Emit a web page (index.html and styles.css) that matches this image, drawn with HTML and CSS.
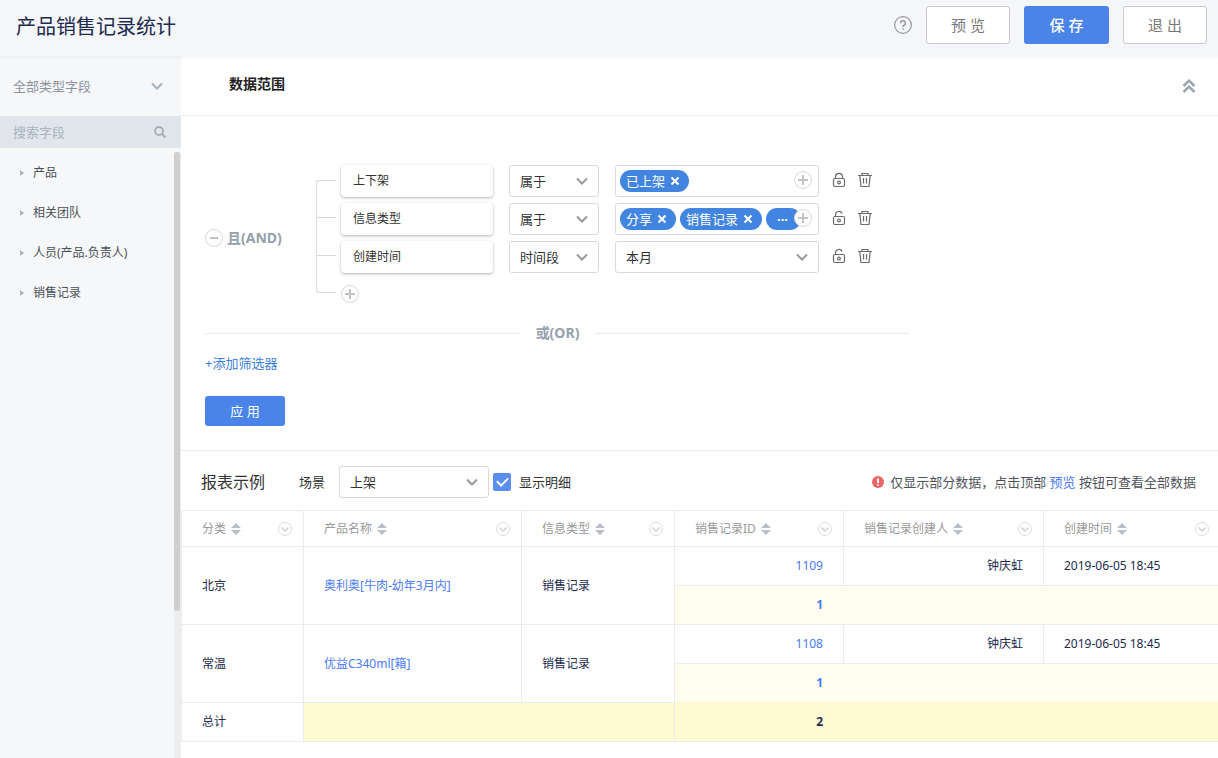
FILE: index.html
```html
<!DOCTYPE html>
<html lang="zh-CN">
<head>
<meta charset="utf-8">
<title>产品销售记录统计</title>
<link rel="stylesheet" href="styles.css">
</head>
<body>
<svg class="sprite" aria-hidden="true">
  <symbol id="chevron" viewBox="0 0 14 14"><path d="M2 4.5 7 9.5 12 4.5" fill="none" stroke="currentColor" stroke-width="2"/></symbol>
  <symbol id="plus" viewBox="0 0 18 18"><circle cx="9" cy="9" r="8.5" fill="#fff" stroke="#d9d9d9"/><path d="M4 9H14M9 4V14" stroke="#c4c4c4" stroke-width="2"/></symbol>
  <symbol id="minus" viewBox="0 0 18 18"><circle cx="9" cy="9" r="8.5" fill="#fff" stroke="#d9d9d9"/><path d="M5 9H13" stroke="#bfbfbf" stroke-width="2"/></symbol>
  <symbol id="cross" viewBox="0 0 10 10"><path d="M1.5 1.5 8.5 8.5M8.5 1.5 1.5 8.5" stroke="currentColor" stroke-width="2"/></symbol>
  <symbol id="lock" viewBox="0 0 14 16"><rect x="1.500" y="6.500" width="11" height="8" rx="1.500" fill="none" stroke="currentColor" stroke-width="1.200"/><path d="M3.500 6.500V4.800A3.500 3.500 0 0 1 10.500 4.800V6.500" fill="none" stroke="currentColor" stroke-width="1.200"/><circle cx="7" cy="10.500" r="1.400" fill="none" stroke="currentColor" stroke-width="1.200"/></symbol>
  <symbol id="unlock" viewBox="0 0 14 16"><rect x="1.500" y="6.500" width="11" height="8" rx="1.500" fill="none" stroke="currentColor" stroke-width="1.200"/><path d="M3.500 6.500V4.800A3.500 3.500 0 0 1 10.200 3.500" fill="none" stroke="currentColor" stroke-width="1.200"/><circle cx="7" cy="10.500" r="1.400" fill="none" stroke="currentColor" stroke-width="1.200"/></symbol>
  <symbol id="trash" viewBox="0 0 14 16"><path d="M0 3.500H14M4 3.500V1.500H10V3.500M1.800 3.500 3 14.500H11L12.200 3.500M5.500 6V11.500M8.500 6V11.500" fill="none" stroke="currentColor" stroke-width="1.200"/></symbol>
  <symbol id="sort" viewBox="0 0 10 12"><path d="M5 0 10 5H0ZM0 7H10L5 12Z" fill="#b9bec7"/></symbol>
  <symbol id="menu" viewBox="0 0 14 14"><circle cx="7" cy="7" r="6.500" fill="#fff" stroke="#dcdcdc"/><path d="M3.500 5.500 7 9 10.500 5.500" fill="none" stroke="#d0d0d0" stroke-width="1.500"/></symbol>
</svg>

<header class="topbar">
  <h1 class="topbar-title">产品销售记录统计</h1>
  <div class="topbar-actions">
    <button class="icon-btn" aria-label="帮助"><svg class="i18" viewBox="0 0 18 18"><circle cx="9" cy="9" r="8.400" fill="none" stroke="#999" stroke-width="1.200"/><path d="M6.600 7.200A2.400 2.400 0 1 1 9.800 9.400Q9 9.800 9 11M9 12.200V13.700" fill="none" stroke="#999" stroke-width="1.500"/></svg></button>
    <button class="btn">预 览</button>
    <button class="btn btn-primary">保 存</button>
    <button class="btn">退 出</button>
  </div>
</header>

<div class="layout">
  <aside class="sidebar">
    <div class="picker scope">
      <select class="scope-select" aria-label="字段类型"><option>全部类型字段</option></select>
      <svg class="picker-arrow"><use href="#chevron"/></svg>
    </div>
    <div class="search">
      <input class="search-input" type="text" placeholder="搜索字段" aria-label="搜索字段">
      <svg class="search-icon" viewBox="0 0 12 12"><circle cx="5" cy="5" r="4" fill="none" stroke="currentColor" stroke-width="1.800"/><path d="M8 8 11.300 11.300" stroke="currentColor" stroke-width="2"/></svg>
    </div>
    <div class="tree-wrap">
      <ul class="tree">
        <li class="tree-item">产品</li>
        <li class="tree-item">相关团队</li>
        <li class="tree-item">人员(产品.负责人)</li>
        <li class="tree-item">销售记录</li>
      </ul>
      <div class="track"><div class="thumb"></div></div>
    </div>
  </aside>

  <main class="main">
    <div class="range-head">
      <h2 class="range-title">数据范围</h2>
      <button class="icon-btn collapse" aria-label="收起"><svg class="i14" viewBox="0 0 14 14"><path d="M1.500 7 7 1.700 12.500 7M1.500 13 7 7.700 12.500 13" fill="none" stroke="currentColor" stroke-width="2.500"/></svg></button>
    </div>

    <section class="filters">
      <div class="group">
        <div class="group-op">
          <button class="icon-btn" aria-label="删除条件组"><svg class="i18"><use href="#minus"/></svg></button>
          <b>且(AND)</b>
        </div>
        <div class="bracket"><i></i><i></i><i></i></div>
        <div class="rules">
          <div class="rule">
            <div class="field">上下架</div>
            <div class="picker op"><select class="box" aria-label="上下架条件"><option>属于</option></select><svg class="picker-arrow"><use href="#chevron"/></svg></div>
            <div class="box value tags">
              <span class="tag">已上架<button class="tag-x" aria-label="移除已上架"><svg class="i10"><use href="#cross"/></svg></button></span>
              <button class="icon-btn tag-add" aria-label="添加值"><svg class="i18"><use href="#plus"/></svg></button>
            </div>
            <div class="rule-tools">
              <button class="icon-btn" aria-label="锁定"><svg class="tool"><use href="#lock"/></svg></button>
              <button class="icon-btn" aria-label="删除"><svg class="tool"><use href="#trash"/></svg></button>
            </div>
          </div>
          <div class="rule">
            <div class="field">信息类型</div>
            <div class="picker op"><select class="box" aria-label="信息类型条件"><option>属于</option></select><svg class="picker-arrow"><use href="#chevron"/></svg></div>
            <div class="box value tags">
              <span class="tag">分享<button class="tag-x" aria-label="移除分享"><svg class="i10"><use href="#cross"/></svg></button></span>
              <span class="tag">销售记录<button class="tag-x" aria-label="移除销售记录"><svg class="i10"><use href="#cross"/></svg></button></span>
              <span class="tag tag-more">···</span>
              <button class="icon-btn tag-add" aria-label="添加值"><svg class="i18"><use href="#plus"/></svg></button>
            </div>
            <div class="rule-tools">
              <button class="icon-btn" aria-label="锁定"><svg class="tool"><use href="#unlock"/></svg></button>
              <button class="icon-btn" aria-label="删除"><svg class="tool"><use href="#trash"/></svg></button>
            </div>
          </div>
          <div class="rule">
            <div class="field">创建时间</div>
            <div class="picker op"><select class="box" aria-label="创建时间条件"><option>时间段</option></select><svg class="picker-arrow"><use href="#chevron"/></svg></div>
            <div class="picker value"><select class="box" aria-label="时间范围"><option>本月</option></select><svg class="picker-arrow"><use href="#chevron"/></svg></div>
            <div class="rule-tools">
              <button class="icon-btn" aria-label="锁定"><svg class="tool"><use href="#unlock"/></svg></button>
              <button class="icon-btn" aria-label="删除"><svg class="tool"><use href="#trash"/></svg></button>
            </div>
          </div>
          <button class="icon-btn rule-add" aria-label="添加条件"><svg class="i18"><use href="#plus"/></svg></button>
        </div>
      </div>
      <div class="or-line"><b>或(OR)</b></div>
      <a class="add-filter" href="#">+添加筛选器</a>
      <button class="btn-primary apply">应 用</button>
    </section>

    <section class="report">
      <div class="report-head">
        <h3 class="report-title">报表示例</h3>
        <label class="scene-label" for="scene">场景</label>
        <div class="picker scene"><select class="box" id="scene"><option>上架</option></select><svg class="picker-arrow"><use href="#chevron"/></svg></div>
        <label class="detail"><input class="check" type="checkbox" checked>显示明细</label>
        <p class="note"><svg class="i12" viewBox="0 0 12 12"><circle cx="6" cy="6" r="6" fill="#ee6567"/><path d="M6 2.500V7M6 8.200V9.700" stroke="#fff" stroke-width="1.800"/></svg><span>仅显示部分数据，点击顶部 <a href="#">预览</a> 按钮可查看全部数据</span></p>
      </div>
      <table class="grid">
        <colgroup><col class="c1"><col class="c2"><col class="c3"><col class="c4"><col class="c5"><col></colgroup>
        <thead>
          <tr>
            <th><div class="th">分类<svg class="sort"><use href="#sort"/></svg><svg class="menu"><use href="#menu"/></svg></div></th>
            <th><div class="th">产品名称<svg class="sort"><use href="#sort"/></svg><svg class="menu"><use href="#menu"/></svg></div></th>
            <th><div class="th">信息类型<svg class="sort"><use href="#sort"/></svg><svg class="menu"><use href="#menu"/></svg></div></th>
            <th><div class="th">销售记录ID<svg class="sort"><use href="#sort"/></svg><svg class="menu"><use href="#menu"/></svg></div></th>
            <th><div class="th">销售记录创建人<svg class="sort"><use href="#sort"/></svg><svg class="menu"><use href="#menu"/></svg></div></th>
            <th><div class="th">创建时间<svg class="sort"><use href="#sort"/></svg><svg class="menu"><use href="#menu"/></svg></div></th>
          </tr>
        </thead>
        <tbody>
          <tr><td rowspan="2">北京</td><td rowspan="2"><a href="#">奥利奥[牛肉-幼年3月内]</a></td><td rowspan="2">销售记录</td><td class="num"><a href="#">1109</a></td><td class="num">钟庆虹</td><td>2019-06-05 18:45</td></tr>
          <tr class="subtotal"><td class="num"><a href="#">1</a></td><td></td><td></td></tr>
          <tr><td rowspan="2">常温</td><td rowspan="2"><a href="#">优益C340ml[箱]</a></td><td rowspan="2">销售记录</td><td class="num"><a href="#">1108</a></td><td class="num">钟庆虹</td><td>2019-06-05 18:45</td></tr>
          <tr class="subtotal last"><td class="num"><a href="#">1</a></td><td></td><td></td></tr>
        </tbody>
        <tfoot>
          <tr class="total"><td>总计</td><td colspan="2"></td><td class="num">2</td><td class="open"></td><td></td></tr>
        </tfoot>
      </table>
    </section>
  </main>
</div>
</body>
</html>
```
FILE: styles.css
```css
* { box-sizing: border-box; }
body {
  margin: 0;
  min-height: 100vh;
  display: flex;
  flex-direction: column;
  font: 13px/20px "Noto Sans", "Noto Sans CJK SC", sans-serif;
  color: #333;
  background: #fff;
}
h1, h2, h3, p, ul { margin: 0; padding: 0; font-weight: 400; }
button, select, input { font: inherit; color: inherit; }
button { cursor: pointer; padding: 0; }
a { color: #4a7bf7; text-decoration: none; }
svg { display: block; flex: none; }
.sprite { position: absolute; width: 0; height: 0; }
.i10 { width: 10px; height: 10px; }
.i12 { width: 12px; height: 12px; }
.i14 { width: 14px; height: 14px; }
.i18 { width: 18px; height: 18px; }
.icon-btn { display: flex; border: 0; background: none; color: #6b6b6b; }

/* top bar */
.topbar {
  position: relative;
  z-index: 1;
  display: flex;
  justify-content: space-between;
  align-items: flex-start;
  height: 56px;
  padding: 6px 11px 0 16px;
  background: #f4f6fa;
  box-shadow: 0 1px 5px rgba(0, 0, 0, .06);
}
.topbar-title { font-size: 20px; line-height: 42px; color: #212b4e; }
.topbar-actions { display: flex; align-items: center; gap: 14px; }
.btn {
  width: 84px;
  height: 38px;
  border: 1px solid #c9c9c9;
  border-radius: 3px;
  background: #fff;
  color: #777;
  font-size: 15px;
}
.btn-primary { border: 0; border-radius: 3px; background: #4a84e8; color: #fff; }
.topbar .btn-primary { width: 85px; font-weight: 500; }

/* drop-downs */
.picker { position: relative; }
.picker select { width: 100%; appearance: none; outline: 0; }
.picker-arrow {
  position: absolute;
  right: 10px;
  top: 50%;
  width: 14px;
  height: 14px;
  margin-top: -7px;
  color: #999;
  pointer-events: none;
}
.box {
  height: 32px;
  border: 1px solid #d9d9d9;
  border-radius: 3px;
  background: #fff;
  padding: 0 10px;
}

/* sidebar */
.layout { flex: 1; display: flex; }
.sidebar {
  flex: none;
  width: 181px;
  display: flex;
  flex-direction: column;
  background: #f5f7f9;
}
.scope { color: #8c939c; }
.scope-select { height: 60px; border: 0; padding: 0 13px; background: none; }
.scope .picker-arrow { right: 17px; color: #a6b0bb; }
.search {
  display: flex;
  align-items: center;
  height: 32px;
  padding: 0 15px 0 13px;
  background: #e1e6ed;
  color: #a3adb8;
}
.search-input { flex: 1; min-width: 0; padding: 0; border: 0; outline: 0; background: none; }
.search-input::placeholder { color: #a9b2bd; }
.search-icon { width: 12px; height: 12px; }
.tree-wrap { flex: 1; display: flex; padding-top: 4px; }
.tree { flex: 1; padding-top: 1px; list-style: none; font-size: 12px; color: #4b5058; }
.tree-item { display: flex; align-items: center; gap: 9px; height: 40px; padding-left: 20px; }
.tree-item::before {
  content: "";
  border: 3px solid transparent;
  border-left: 4px solid #a9b1ba;
  border-right: 0;
}
.track { width: 7px; background: #ebedef; }
.thumb { width: 6px; height: 459px; border-radius: 3px; background: #cfcfcf; }

/* data range */
.main { flex: 1; min-width: 0; }
.range-head {
  display: flex;
  justify-content: space-between;
  align-items: center;
  height: 60px;
  padding: 0 22px 4px 48px;
  border-bottom: 1px solid #ebebeb;
}
.range-title { font-size: 14px; font-weight: 700; color: #222; }
.collapse { color: #9aa5b0; padding-top: 4px; }
.filters { padding: 49px 24px 24px; border-bottom: 1px solid #ebebeb; }
.group { display: flex; align-items: flex-start; }
.group-op {
  display: flex;
  align-items: center;
  gap: 4px;
  width: 111px;
  height: 145px;
  font-size: 14px;
  color: #95a0ad;
}
.bracket {
  width: 20px;
  height: 113px;
  margin: 15px 5px 0 0;
  display: flex;
  flex-direction: column;
  border: solid #d9d9d9;
  border-width: 1px 0 1px 1px;
  border-radius: 3px 0 0 3px;
}
.bracket i { flex: 1; border-bottom: 1px solid #d9d9d9; }
.bracket i:last-child { border: 0; }
.rules { display: grid; gap: 6px; }
.rule { display: flex; gap: 16px; }
.field {
  width: 152px;
  height: 32px;
  padding: 0 12px;
  border-radius: 4px;
  line-height: 32px;
  font-size: 12px;
  background: #fff;
  box-shadow: 0 1px 3px rgba(0, 0, 0, .3);
}
.op { width: 90px; }
.value { width: 204px; }
.tags { position: relative; display: flex; align-items: center; gap: 4px; padding: 0 4px; }
.tag {
  display: flex;
  align-items: center;
  gap: 5px;
  height: 22px;
  padding: 0 9px 0 6px;
  border-radius: 11px;
  background: #4285e0;
  color: #fff;
}
.tag-more { width: 35px; padding: 0 11px; font-weight: 700; }
.tag-x { display: flex; border: 0; background: none; }
.tag-add { position: absolute; right: 6px; top: 5px; }
.rule-tools { display: flex; align-items: center; gap: 12px; margin-left: -3px; padding-bottom: 2px; }
.tool { width: 14px; height: 16px; }
.rule-add { margin-top: 6px; width: 18px; }
.or-line {
  display: flex;
  align-items: center;
  gap: 16px;
  max-width: 705px;
  margin-top: 13px;
  font-size: 14px;
  color: #95a0ad;
}
.or-line::before, .or-line::after { content: ""; flex: 1; height: 1px; background: #ebebeb; }
.add-filter { display: block; width: max-content; margin-top: 10px; color: #3d81dd; }
.apply { display: block; width: 80px; height: 30px; margin-top: 23px; }

/* report */
.report-head { display: flex; align-items: center; height: 59px; padding: 2px 22px 0 20px; }
.report-title { font-size: 16px; margin-right: 34px; }
.scene-label { margin-right: 14px; }
.scene { width: 150px; margin-right: 4px; }
.detail { display: flex; align-items: center; gap: 8px; }
.check {
  appearance: none;
  width: 18px;
  height: 18px;
  margin: 0;
  border-radius: 2px;
  background: #5a8fee;
  display: grid;
  place-items: center;
}
.check:checked::before {
  content: "";
  width: 9px;
  height: 5px;
  margin-bottom: 3px;
  border: solid #fff;
  border-width: 0 0 2px 2px;
  transform: rotate(-45deg);
}
.note { display: flex; align-items: center; gap: 6px; margin-left: auto; color: #4f535a; }

.grid {
  width: 100%;
  table-layout: fixed;
  border-collapse: separate;
  border-spacing: 0;
  border: solid #ebebeb;
  border-width: 1px 0 0 1px;
  font-size: 12px;
  line-height: 18px;
  color: #212b4e;
}
.c1 { width: 122px; }
.c2 { width: 218px; }
.c3 { width: 153px; }
.c4 { width: 169px; }
.c5 { width: 200px; }
.grid th, .grid td {
  height: 39px;
  padding: 0 20px;
  text-align: left;
  border: solid #ebebeb;
  border-width: 0 1px 1px 0;
}
.grid th { height: 36px; padding-right: 11px; font-weight: 400; color: #999; }
.grid tr > :last-child { border-right: 0; padding-right: 9px; }
.th { display: flex; align-items: center; }
.sort { width: 10px; height: 12px; margin-left: 5px; }
.menu { width: 14px; height: 14px; margin-left: auto; }
.grid .num { text-align: right; }
.subtotal td { background: #fffef0; font-weight: 700; }
.grid .last td { border-bottom-color: #fefad1; }
.total td { background: #fefad1; font-weight: 700; }
.grid .total td:first-child { background: #fff; font-weight: 400; }
.grid .total .num, .grid .total .open, .grid .subtotal td { border-right: 0; }
.grid .total .num, .grid .subtotal .num { padding-right: 21px; }
```
